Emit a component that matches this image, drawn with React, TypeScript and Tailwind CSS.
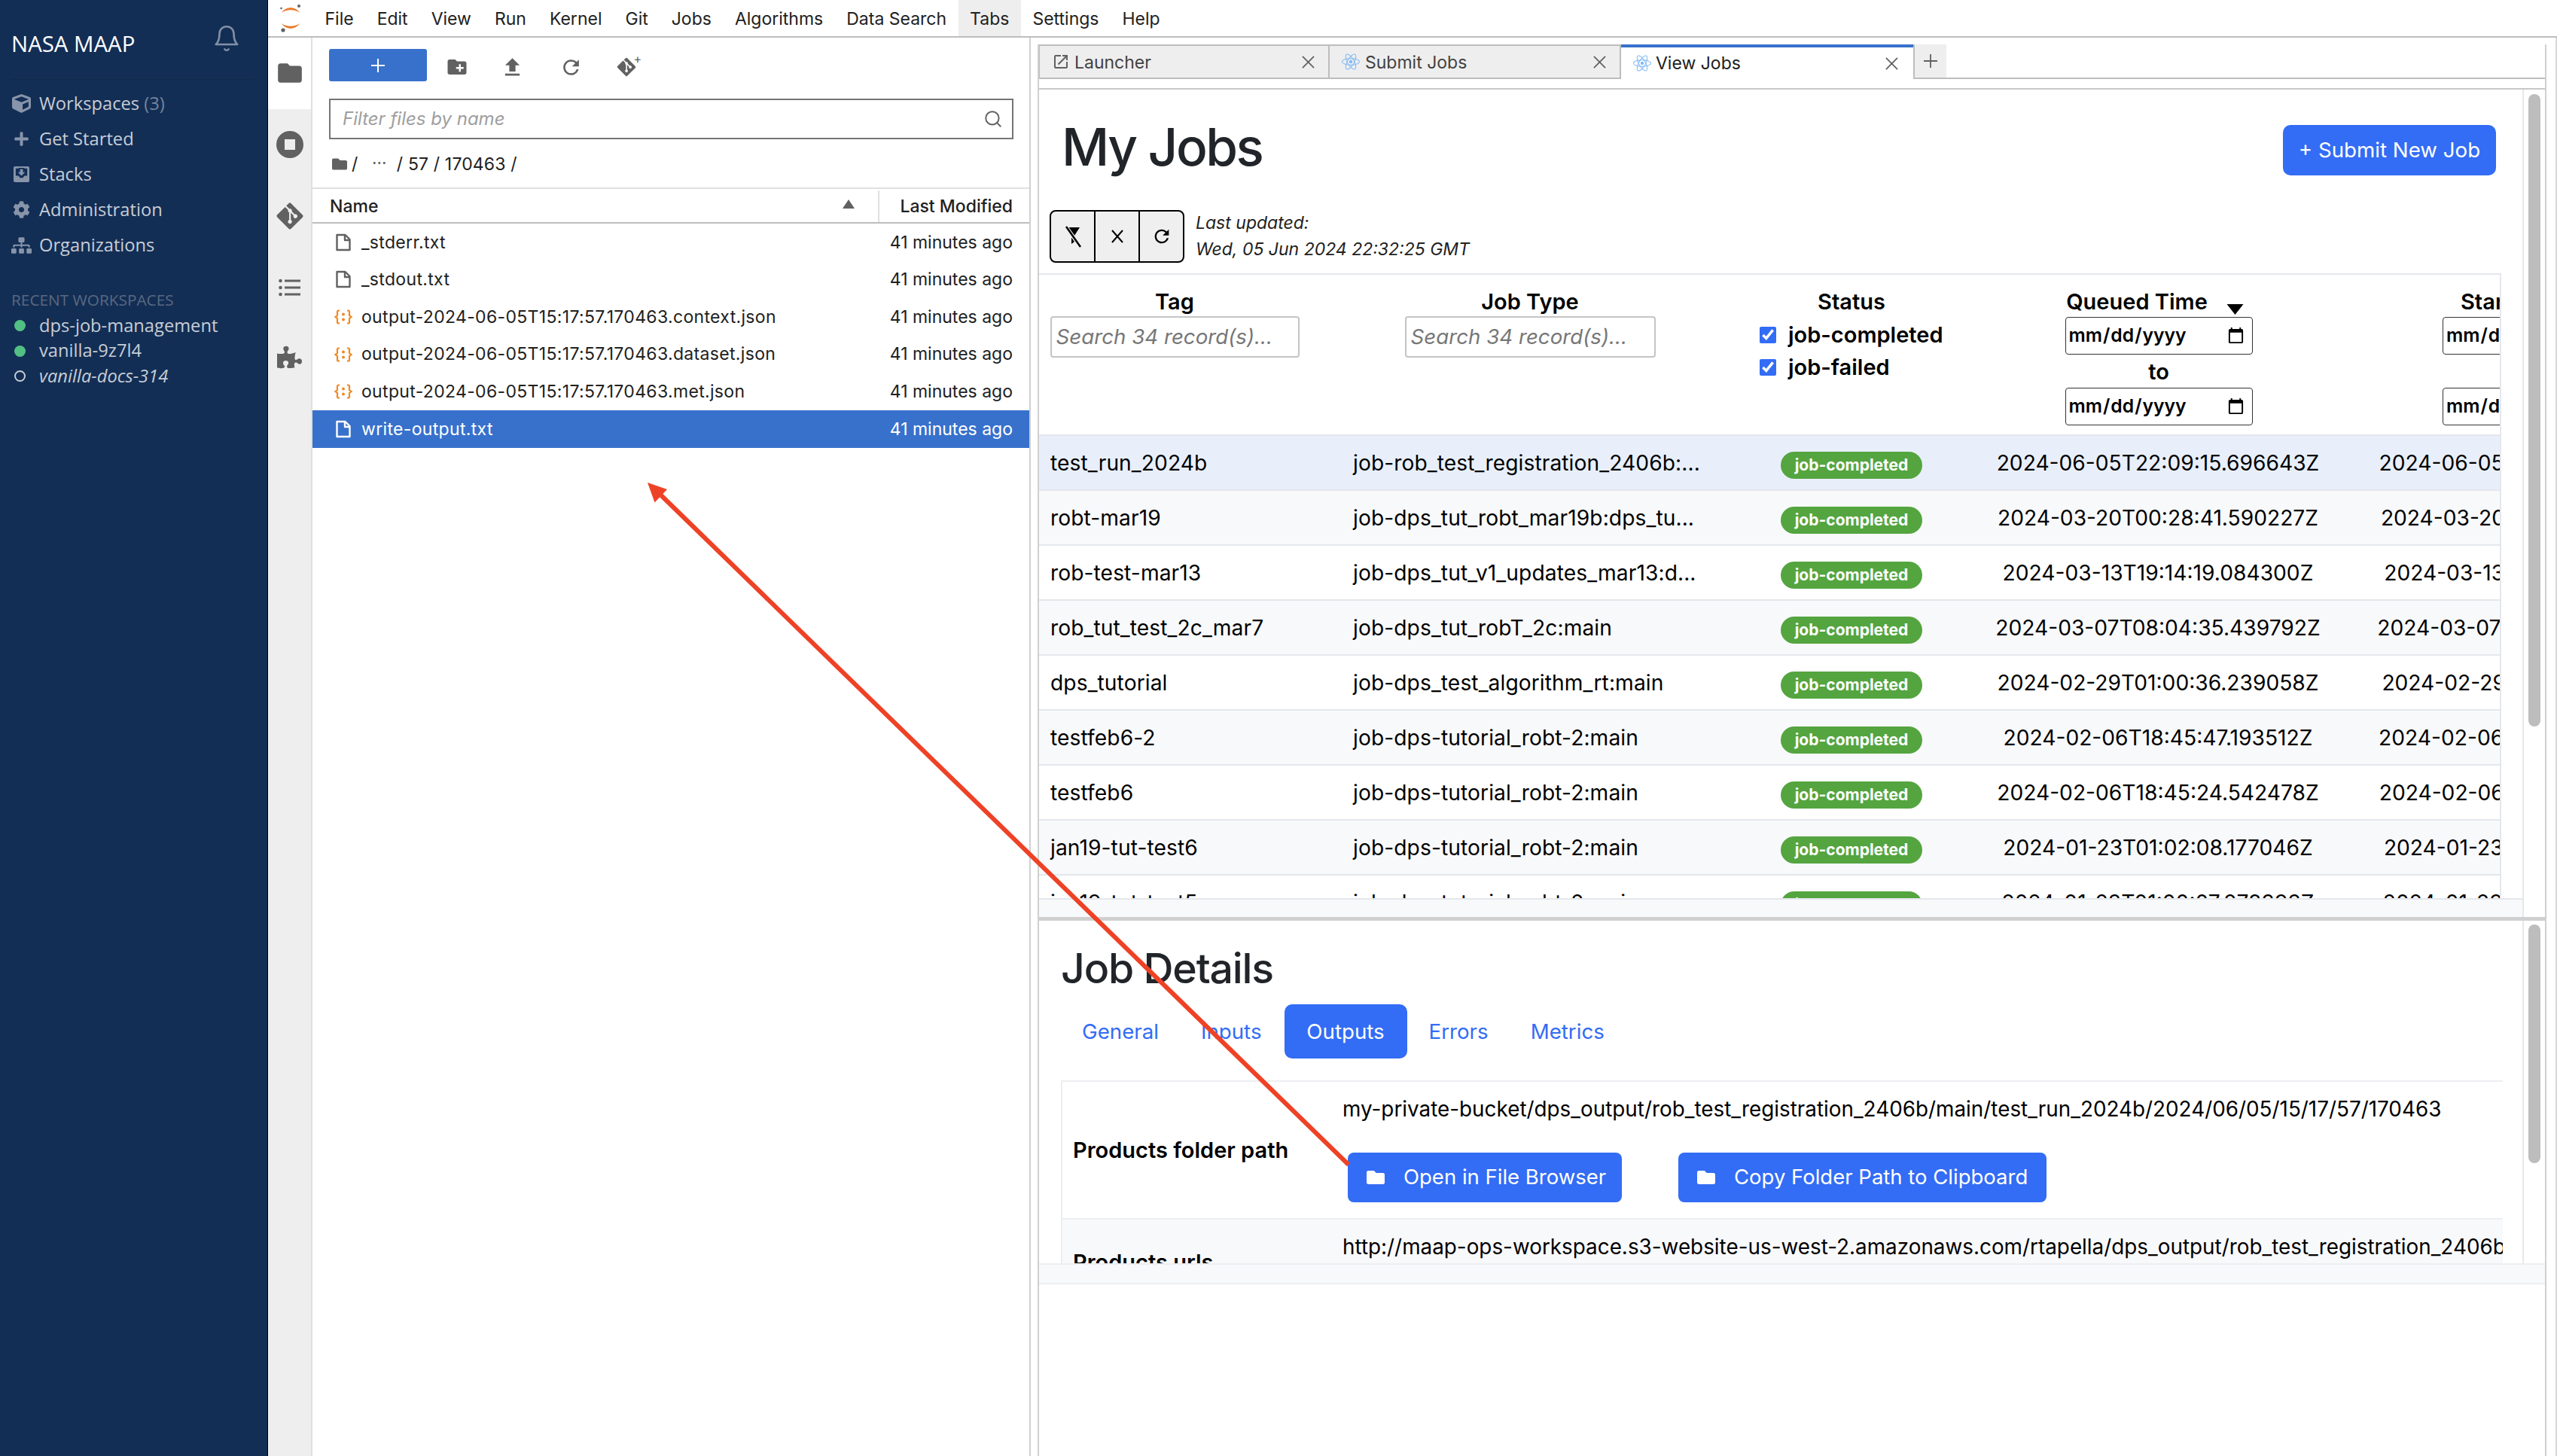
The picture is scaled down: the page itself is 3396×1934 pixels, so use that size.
import React from "react";
import { FaCube, FaPlus, FaCog, FaSitemap, FaGitAlt, FaPuzzlePiece, FaReact, FaFolder } from "react-icons/fa";
import { MdFolder, MdCreateNewFolder, MdFileUpload, MdRefresh, MdOpenInNew } from "react-icons/md";
import { LuBell, LuSearch } from "react-icons/lu";

const gray = "#616161";

function Logo() {
  return (
    <svg viewBox="0 0 30 38" className="w-[30px] h-[38px]">
      <path d="M3 12 C8 3 22 3 27 12 C21 7 9 7 3 12Z" fill="#e87b2c" />
      <path d="M3 26 C8 35 22 35 27 26 C21 31 9 31 3 26Z" fill="#e87b2c" />
      <circle cx="26" cy="3" r="2" fill="#616161" />
      <circle cx="2.5" cy="6" r="1.3" fill="#616161" />
      <circle cx="5" cy="35" r="2.6" fill="#616161" />
    </svg>
  );
}

function Sidebar() {
  const nav: [React.ReactNode, React.ReactNode][] = [
    [<FaCube className="w-[25px] h-[25px]" />, <>Workspaces <span className="text-[#75849c]">(3)</span></>],
    [<FaPlus className="w-[21px] h-[21px]" />, "Get Started"],
    [
      <svg viewBox="0 0 22 22" className="w-[21px] h-[21px]">
        <path fillRule="evenodd" d="M2 0h18a2 2 0 0 1 2 2v18a2 2 0 0 1-2 2H2a2 2 0 0 1-2-2V2a2 2 0 0 1 2-2Zm1 3v10h4l2 3h4l2-3h4V3h-4v-1H7v1H3Z" fill="currentColor" />
        <path d="M9 4h4v4h3l-5 5-5-5h3V4Z" fill="currentColor" />
      </svg>,
      "Stacks",
    ],
    [<FaCog className="w-[23px] h-[23px]" />, "Administration"],
    [<FaSitemap className="w-[27px] h-[24px]" />, "Organizations"],
  ];
  const recent: [string, boolean][] = [
    ["dps-job-management", true],
    ["vanilla-9z7l4", true],
    ["vanilla-docs-314", false],
  ];
  return (
    <aside className="w-[356px] shrink-0 h-full bg-[#132e55] border-r border-[#000000] font-['Open_Sans',sans-serif] flex flex-col">
      <div className="h-[106px] mx-[15px] mr-[18px] border-b border-[#102848] flex items-start justify-between">
        <span className="text-[29.4px] leading-[38px] mt-[39px] text-white">NASA MAAP</span>
        <LuBell className="w-[38px] h-[38px] mt-[32px] mr-[17px] text-[#8290a6]" strokeWidth={1.6} />
      </div>
      <nav className="mt-[8px] flex flex-col">
        {nav.map(([icon, label], i) => (
          <div key={i} className="h-[47px] flex items-center pl-[15px] text-[#c7cdd6] text-[23.7px]">
            <span className="w-[27px] flex justify-center text-[#8794aa]">{icon}</span>
            <span className="ml-[10px]">{label}</span>
          </div>
        ))}
      </nav>
      <div className="ml-[15px] mt-[36px] text-[#5a6880] text-[20.8px] leading-[26px]">RECENT WORKSPACES</div>
      <div className="mt-[5px] flex flex-col">
        {recent.map(([name, on]) => (
          <div key={name} className="h-[33.5px] flex items-center pl-[19px] text-[#c7cdd6] text-[23.7px]">
            <span className={on ? "w-[15px] h-[15px] rounded-full bg-[#52c084]" : "w-[15px] h-[15px] rounded-full border-[2.5px] border-[#c7cdd6]"} />
            <span className={on ? "ml-[18px]" : "ml-[18px] italic"}>{name}</span>
          </div>
        ))}
      </div>
    </aside>
  );
}

function Menubar() {
  const items = ["File", "Edit", "View", "Run", "Kernel", "Git", "Jobs", "Algorithms", "Data Search", "Tabs", "Settings", "Help"];
  return (
    <div className="h-[50px] shrink-0 border-b-2 border-[#bdbdbd] flex">
      <div className="w-[59px] flex items-center justify-center pb-[1px]"><Logo /></div>
      <div className="ml-[1px] flex text-[23px] text-[#212121]">
        {items.map((m) => (
          <div key={m} className={m === "Tabs" ? "h-[48px] flex items-center pt-[2px] px-[15.5px] bg-[#eeeeee]" : "h-[48px] flex items-center pt-[2px] px-[15.5px]"}>{m}</div>
        ))}
      </div>
    </div>
  );
}

function ActivityBar() {
  const cls = "h-[94.8px] flex items-center justify-center";
  return (
    <div className="w-[59px] shrink-0 bg-[#eeeeee] border-r-2 border-[#e0e0e0] flex flex-col text-[#616161]">
      <div className={cls + " bg-white"}><MdFolder className="w-[38px] h-[38px]" /></div>
      <div className={cls}>
        <svg viewBox="0 0 36 36" className="w-[36px] h-[36px]">
          <path fillRule="evenodd" d="M18 0a18 18 0 1 1 0 36 18 18 0 0 1 0-36Zm-7 11v14h14V11H11Z" fill={gray} />
        </svg>
      </div>
      <div className={cls}><FaGitAlt className="w-[40px] h-[40px]" /></div>
      <div className={cls}>
        <svg viewBox="0 0 30 24" className="w-[30px] h-[24px]" fill={gray}>
          <circle cx="2.5" cy="3" r="2.3" /><circle cx="2.5" cy="12" r="2.3" /><circle cx="2.5" cy="21" r="2.3" />
          <rect x="8" y="1.5" width="21" height="3" /><rect x="8" y="10.5" width="21" height="3" /><rect x="8" y="19.5" width="21" height="3" />
        </svg>
      </div>
      <div className={cls + " -mt-[2px]"}><FaPuzzlePiece className="w-[33px] h-[33px]" /></div>
    </div>
  );
}

function FileIcon({ color }: { color: string }) {
  return (
    <svg viewBox="0 0 24 24" className="w-[24px] h-[24px] shrink-0" fill="none" stroke={color} strokeWidth="2.4" strokeLinejoin="round">
      <path d="M3.5 2h11l6 6v14h-17V2Z" />
      <path d="M14 2v7h6.5" />
    </svg>
  );
}

function JsonIcon() {
  return (
    <svg viewBox="0 0 24 20" className="w-[24px] h-[20px] shrink-0" fill="none" stroke="#f08a24" strokeWidth="2.2">
      <path d="M7 1.5H5.5A1.5 1.5 0 0 0 4 3v5l-2.5 2L4 12v5a1.5 1.5 0 0 0 1.5 1.5H7" />
      <path d="M17 1.5h1.5A1.5 1.5 0 0 1 20 3v5l2.5 2-2.5 2v5a1.5 1.5 0 0 1-1.5 1.5H17" />
      <circle cx="12" cy="6.5" r="2" fill="#f08a24" stroke="none" />
      <circle cx="12" cy="13.5" r="2" fill="#f08a24" stroke="none" />
    </svg>
  );
}

function FilePanel() {
  const rows: [string, boolean][] = [
    ["_stderr.txt", false],
    ["_stdout.txt", false],
    ["output-2024-06-05T15:17:57.170463.context.json", true],
    ["output-2024-06-05T15:17:57.170463.dataset.json", true],
    ["output-2024-06-05T15:17:57.170463.met.json", true],
    ["write-output.txt", false],
  ];
  return (
    <div className="w-[954px] shrink-0 border-r-2 border-[#d0d0d0] flex flex-col text-[23px] text-[#212121]">
      <div className="h-[75px] pt-[15px] pl-[22px] flex items-start">
        <div className="w-[130px] h-[43px] bg-[#3871cc] rounded-[3px] flex items-center justify-center text-white">
          <svg viewBox="0 0 20 20" className="w-[20px] h-[20px]" stroke="#fff" strokeWidth="2"><path d="M10 1v18M1 10h18" /></svg>
        </div>
        <div className="flex items-center h-[48px] text-[#616161]">
          <span className="w-[80px] flex justify-center"><MdCreateNewFolder className="w-[30px] h-[30px]" /></span>
          <span className="w-[68px] flex justify-center -ml-[1px]"><MdFileUpload className="w-[33px] h-[33px]" /></span>
          <span className="w-[84px] flex justify-center ml-[2px]"><MdRefresh className="w-[31px] h-[31px]" /></span>
          <span className="w-[68px] flex justify-center relative -ml-[2px]">
            <FaGitAlt className="w-[28px] h-[28px]" />
            <span className="absolute right-[14px] -top-[5px] text-[16px] leading-none">+</span>
          </span>
        </div>
      </div>
      <div className="ml-[22px] mr-[21px] mt-[6px] h-[54px] border-2 border-[#757575] flex items-center pl-[16px] pr-[12px] justify-between">
        <span className="italic text-[#9e9e9e] text-[24px]">Filter files by name</span>
        <LuSearch className="w-[26px] h-[26px] text-[#616161]" strokeWidth={1.8} />
      </div>
      <div className="h-[64px] pl-[26px] pt-[2px] flex items-center">
        <FaFolder className="w-[20px] h-[20px] text-[#616161]" />
        <span className="ml-[6px]">/</span>
        <span className="ml-[19px] text-[#616161] -mt-[3px] tracking-[0.5px] text-[18px] font-bold leading-none">···</span>
        <span className="ml-[13px] whitespace-pre tracking-[0.15px]">/ 57 / 170463 /</span>
      </div>
      <div className="h-[48px] shrink-0 border-t-2 border-b-2 pt-[2px] border-t-[#e0e0e0] border-b-[#bdbdbd] flex items-center font-medium">
        <div className="w-[751px] h-full pl-[23px] pr-[31px] flex items-center justify-between">
          <span>Name</span>
          <svg viewBox="0 0 16 12" className="w-[16px] h-[12px] -mt-[6px]"><path d="M8 0l8 12H0Z" fill="#616161" /></svg>
        </div>
        <div className="flex-1 h-full border-l-2 border-[#e0e0e0] flex items-center justify-end pr-[22px]">Last Modified</div>
      </div>
      {rows.map(([name, json]) => {
        const sel = name === "write-output.txt";
        return (
          <div key={name} className={sel ? "h-[49.6px] shrink-0 flex items-center pl-[29px] pr-[22px] justify-between bg-[#3871cc] text-white" : "h-[49.6px] shrink-0 flex items-center pl-[29px] pr-[22px] justify-between"}>
            <span className="flex items-center">
              {json ? <JsonIcon /> : <FileIcon color={sel ? "#ffffff" : "#616161"} />}
              <span className="ml-[12px] tracking-[0.33px]">{name}</span>
            </span>
            <span>41 minutes ago</span>
          </div>
        );
      })}
    </div>
  );
}

function CloseX() {
  return (
    <svg viewBox="0 0 18 18" className="w-[17px] h-[17px]" stroke="#616161" strokeWidth="1.8"><path d="M1 1l16 16M17 1L1 17" /></svg>
  );
}

function TabStrip() {
  const base = "h-[46px] flex items-center text-[23px]";
  const inactive = base + " w-[387px] bg-[#eeeeee] border-t-2 border-r-2 border-b-2 border-[#bdbdbd] text-[#424242] pl-[16px] pr-[18px]";
  return (
    <div className="h-[46px] flex">
      <div className={inactive + " border-l-2"}>
        <MdOpenInNew className="w-[24px] h-[24px] text-[#616161]" />
        <span className="ml-[6px] flex-1 pt-[2px]">Launcher</span>
        <CloseX />
      </div>
      <div className={inactive}>
        <FaReact className="w-[24px] h-[24px] text-[#7fb9f5]" />
        <span className="ml-[7px] flex-1 pt-[2px]">Submit Jobs</span>
        <CloseX />
      </div>
      <div className={base + " w-[388px] border-t-[4px] border-[#3871cc] text-[#212121] pl-[16px] pr-[20px]"}>
        <FaReact className="w-[24px] h-[24px] text-[#7fb9f5]" />
        <span className="ml-[6px] flex-1">View Jobs</span>
        <CloseX />
      </div>
      <div className="w-[44px] h-[46px] bg-[#eeeeee] border-b-2 border-l-2 border-[#bdbdbd] flex items-center justify-center">
        <svg viewBox="0 0 18 18" className="w-[18px] h-[18px]" stroke="#616161" strokeWidth="1.8"><path d="M9 0v18M0 9h18" /></svg>
      </div>
      <div className="flex-1 border-b-2 border-[#bdbdbd]" />
    </div>
  );
}

function DateInput() {
  return (
    <input
      type="date"
      className="w-[249px] h-[50px] border border-[#333333] rounded-[4px] pl-[3px] pr-[7px] bg-white text-[24.7px] text-black"
    />
  );
}

function Scrollbar({ h, gap }: { h: number; gap: number }) {
  return (
    <div className="w-[30px] shrink-0 border-l-2 border-[#e8e8e8] bg-white flex justify-center">
      <div className="w-[16px] rounded-full bg-[#bdbdbd]" style={{ height: h, marginTop: gap }} />
    </div>
  );
}

const jobs = [
  ["test_run_2024b", "job-rob_test_registration_2406b:...", "2024-06-05T22:09:15.696643Z", "2024-06-05T22:09:18.412207Z"],
  ["robt-mar19", "job-dps_tut_robt_mar19b:dps_tu...", "2024-03-20T00:28:41.590227Z", "2024-03-20T00:28:44.610112Z"],
  ["rob-test-mar13", "job-dps_tut_v1_updates_mar13:d...", "2024-03-13T19:14:19.084300Z", "2024-03-13T19:14:21.310044Z"],
  ["rob_tut_test_2c_mar7", "job-dps_tut_robT_2c:main", "2024-03-07T08:04:35.439792Z", "2024-03-07T08:04:38.120455Z"],
  ["dps_tutorial", "job-dps_test_algorithm_rt:main", "2024-02-29T01:00:36.239058Z", "2024-02-29T01:00:39.118023Z"],
  ["testfeb6-2", "job-dps-tutorial_robt-2:main", "2024-02-06T18:45:47.193512Z", "2024-02-06T18:45:49.102883Z"],
  ["testfeb6", "job-dps-tutorial_robt-2:main", "2024-02-06T18:45:24.542478Z", "2024-02-06T18:45:27.440912Z"],
  ["jan19-tut-test6", "job-dps-tutorial_robt-2:main", "2024-01-23T01:02:08.177046Z", "2024-01-23T01:02:11.220367Z"],
  ["jan19-tut-test5", "job-dps-tutorial_robt-2:main", "2024-01-23T01:00:07.278393Z", "2024-01-23T01:00:10.330184Z"],
];

function Cols({ children, className }: { children: React.ReactNode; className: string }) {
  return <div className={"grid grid-cols-[401px_502px_352px_464px_540px] w-[2259px] " + className}>{children}</div>;
}

function JobsTable() {
  return (
    <div className="w-[1942px] h-[830px] border-t-2 border-r-2 border-[#e4e7ec] overflow-hidden shrink-0">
      <Cols className="h-[214px] border-b-2 border-[#e4e7ec] text-black font-semibold text-[29px]">
        <div className="pr-[41px] pt-[19px] flex flex-col items-center">
          <span className="leading-[34px]">Tag</span>
          <div className="w-[331px] h-[55px] mt-[2px] border-2 border-[#c4c4c4] rounded-[4px] pl-[6px] flex items-center italic font-normal text-[27.7px] text-[#777777]">Search 34 record(s)...</div>
        </div>
        <div className="pt-[19px] flex flex-col items-center">
          <span className="leading-[34px]">Job Type</span>
          <div className="w-[333px] h-[55px] mt-[2px] border-2 border-[#c4c4c4] rounded-[4px] pl-[6px] flex items-center italic font-normal text-[27.7px] text-[#777777]">Search 34 record(s)...</div>
        </div>
        <div className="pt-[19px] flex flex-col">
          <span className="leading-[34px] text-center">Status</span>
          <label className="flex items-center h-[43px] pl-[54px] mt-[5px]">
            <input type="checkbox" defaultChecked className="w-[22px] h-[22px] accent-[#336cf5]" />
            <span className="ml-[16px]">job-completed</span>
          </label>
          <label className="flex items-center h-[43px] pl-[54px]">
            <input type="checkbox" defaultChecked className="w-[22px] h-[22px] accent-[#336cf5]" />
            <span className="ml-[16px]">job-failed</span>
          </label>
        </div>
        <div className="pt-[19px] flex flex-col items-center">
          <div className="relative -translate-x-[29px]">
            <span className="leading-[34px] block">Queued Time</span>
            <svg viewBox="0 0 24 14" className="absolute -right-[49px] top-[20px] w-[25px] h-[14px]"><path d="M1 0h22L12 14Z" fill="#000" /></svg>
          </div>
          <div className="mt-[3px]"><DateInput /></div>
          <span className="leading-[44px] mt-[1px] -mb-[1px]">to</span>
          <DateInput />
        </div>
        <div className="pt-[19px] pl-[145px] flex flex-col">
          <span className="leading-[34px] pl-[24px]">Start Time</span>
          <div className="mt-[3px]"><DateInput /></div>
          <div className="mt-[44px]"><DateInput /></div>
        </div>
      </Cols>
      {jobs.map((j, i) => (
        <Cols key={j[0]} className={"h-[73px] items-center border-b-2 border-[#e4e7ec] text-[#000000] text-[28.2px] " + (i === 0 ? "bg-[#e8effb]" : i % 2 === 1 ? "bg-[#f8f9fb]" : "bg-white")}>
          <div className="pl-[15px] pt-[2px] whitespace-nowrap tracking-[0.08px]">{j[0]}</div>
          <div className="pl-[16px] pt-[2px] whitespace-nowrap tracking-[0.08px]">{j[1]}</div>
          <div className="flex justify-center pt-[6px]">
            <span className="w-[188px] h-[36px] rounded-[18px] bg-[#54a53f] text-white font-bold text-[21px] flex items-center justify-center">job-completed</span>
          </div>
          <div className="pt-[2px] pr-[2px] text-center whitespace-nowrap">{j[2]}</div>
          <div className="pt-[2px] pl-[2px] text-center whitespace-nowrap">{j[3]}</div>
        </Cols>
      ))}
    </div>
  );
}

function JobsPane() {
  return (
    <div className="h-[1099px] shrink-0 flex">
      <div className="w-[1970px] flex flex-col overflow-hidden">
        <div className="h-[244px] shrink-0 flex flex-col">
          <div className="pt-[47px] pl-[30px] pr-[35px] flex justify-between items-start">
            <h1 className="text-[69.3px] leading-[84px] -mt-[13px] -mb-[14px] font-medium tracking-[-2.5px] text-[#212529]">My Jobs</h1>
            <button className="w-[283px] h-[67px] rounded-[10px] bg-[#336cf5] text-white text-[27.7px]">+ Submit New Job</button>
          </div>
          <div className="pl-[14px] mt-[46px] flex items-center">
            <div className="w-[179px] h-[70px] rounded-[8px] border-2 border-black bg-[#efefef] flex text-black">
              <div className="flex-1 flex items-center justify-center border-r-2 border-black">
                <svg viewBox="0 0 22 30" className="w-[22px] h-[30px]"><path d="M2 3h18l-7 11v8l-4 3V14Z" fill="#000" /><path d="M1 1l20 28" stroke="#efefef" strokeWidth="5" /><path d="M2 2l19 27" stroke="#000" strokeWidth="2.5" /></svg>
              </div>
              <div className="flex-1 flex items-center justify-center border-r-2 border-black">
                <svg viewBox="0 0 16 18" className="w-[16px] h-[18px]" stroke="#000" strokeWidth="2"><path d="M1 1l14 16M15 1L1 17" /></svg>
              </div>
              <div className="flex-1 flex items-center justify-center"><MdRefresh className="w-[28px] h-[28px]" /></div>
            </div>
            <div className="ml-[15px] italic text-[23px] leading-[35px] text-[#212121]">
              <div>Last updated:</div>
              <div>Wed, 05 Jun 2024 22:32:25 GMT</div>
            </div>
          </div>
        </div>
        <JobsTable />
        <div className="flex-1 bg-[#f8f9fa] border-t-2 border-[#e4e7ec]" />
      </div>
      <Scrollbar h={840} gap={6} />
    </div>
  );
}

function DetailButton({ width, label, mx }: { width: string; label: string; mx: string }) {
  return (
    <button className={width + " " + mx + " h-[66px] rounded-[8px] bg-[#336cf5] text-white text-[27.5px] flex items-center pl-[23px] shrink-0"}>
      <FaFolder className="w-[28px] h-[24px] mr-[23px]" />
      {label}
    </button>
  );
}

function DetailsPane() {
  const tabs = ["General", "Inputs", "Outputs", "Errors", "Metrics"];
  return (
    <div className="h-[455px] shrink-0 flex">
      <div className="w-[1970px] overflow-hidden pl-[29px]">
        <h2 className="mt-[33px] text-[55.4px] leading-[60px] font-medium tracking-[-1.2px] text-[#212529]">Job Details</h2>
        <div className="mt-[18px] flex text-[27.7px] text-[#336cf5] h-[72px]">
          {tabs.map((t) => (
            <div key={t} className={t === "Outputs" ? "w-[163px] ml-[2px] mr-[1px] pt-[2px] justify-center rounded-[10px] bg-[#336cf5] text-white flex items-center" : "px-[28px] pt-[2px] flex items-center"}>{t}</div>
          ))}
        </div>
        <div className="mt-[29px] w-[1915px] border-t-2 border-l-2 border-[#eceef1] text-[27.85px] text-black">
          <div className="h-[183px] flex border-b-2 border-[#eceef1]">
            <div className="w-[372px] pl-[14px] flex items-center font-semibold text-[29px] shrink-0">Products folder path</div>
            <div className="flex-1 min-w-0">
              <div className="h-[36px] mt-[18px] leading-[36px] whitespace-nowrap">my-private-bucket/dps_output/rob_test_registration_2406b/main/test_run_2024b/2024/06/05/15/17/57/170463</div>
              <div className="mt-[40px] flex">
                <DetailButton width="w-[364px]" mx="ml-[7px]" label="Open in File Browser" />
                <DetailButton width="w-[489px]" mx="ml-[75px]" label="Copy Folder Path to Clipboard" />
              </div>
            </div>
          </div>
          <div className="h-[114px] flex bg-[#f8f9fb]">
            <div className="w-[372px] pl-[14px] flex items-center font-semibold text-[29px] shrink-0">Products urls</div>
            <div className="flex-1 min-w-0 overflow-hidden">
              <div className="mt-[18px] leading-[36px] whitespace-nowrap">http://maap-ops-workspace.s3-website-us-west-2.amazonaws.com/rtapella/dps_output/rob_test_registration_2406b/main/test_run_2024b/2024/06/05/15/17/57/170463</div>
            </div>
          </div>
        </div>
      </div>
      <Scrollbar h={317} gap={5} />
    </div>
  );
}

function Dock() {
  return (
    <div className="flex-1 min-w-0 pt-[9px] pl-[9px] pr-[12px] border-r-2 border-[#d8d8d8] flex flex-col">
      <div className="border-r-2 border-l-2 border-[#d0d0d0] flex-1 flex flex-col overflow-hidden">
        <div className="-ml-[1px]"><TabStrip /></div>
        <div className="h-[14px] shrink-0 border-b-2 border-[#c8c8c8]" />
        <JobsPane />
        <div className="h-[5px] shrink-0 bg-[#d0d0d0]" />
        <DetailsPane />
        <div className="h-[28px] shrink-0 bg-[#f8f9fa] border-t-2 border-b-2 border-[#eceef1]" />
      </div>
    </div>
  );
}

function Arrow() {
  return (
    <svg className="absolute left-0 top-0 w-[3396px] h-[1934px] pointer-events-none" viewBox="0 0 3396 1934">
      <path d="M1791 1547 L876 656" stroke="#ee4226" strokeWidth="6" fill="none" />
      <path d="M860 641 L886 650 L869.5 667.5Z" fill="#ee4226" />
    </svg>
  );
}

export default function App() {
  return (
    <div className="relative w-[3396px] h-[1934px] overflow-hidden flex bg-white font-['Inter',sans-serif]">
      <Sidebar />
      <div className="flex-1 min-w-0 flex flex-col">
        <Menubar />
        <div className="flex-1 min-h-0 flex">
          <ActivityBar />
          <FilePanel />
          <Dock />
        </div>
      </div>
      <Arrow />
    </div>
  );
}
